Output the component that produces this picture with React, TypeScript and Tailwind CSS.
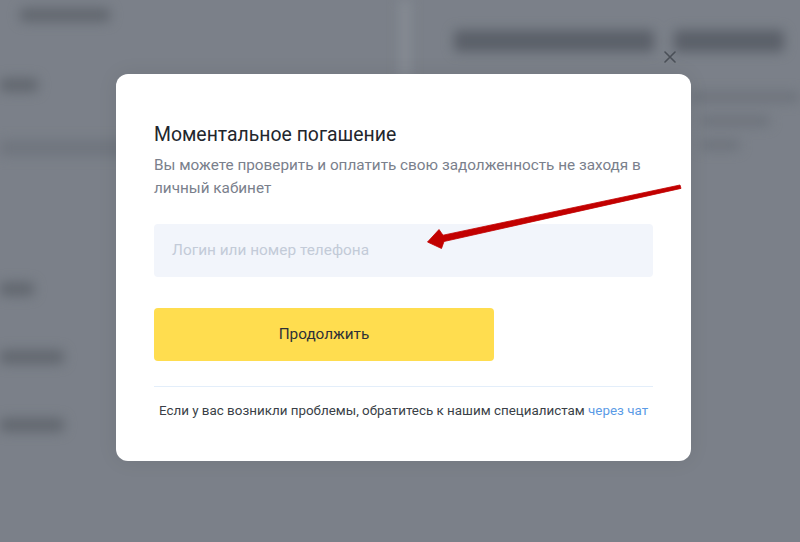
import React from "react";

export default function App() {
  return (
    <div className="relative w-[800px] h-[542px] overflow-hidden bg-[#7b8089]" style={{ fontFamily: "Roboto, 'Noto Sans', sans-serif" }}>
      {/* blurred background page */}
      <div className="flex h-full blur-[6px]">
        <div className="w-[400px] flex flex-col pt-[8px]">
          <div className="ml-[20px] h-[14px] w-[90px] rounded bg-[#62676f]" />
          <div className="mt-[56px] h-[14px] w-[38px] rounded bg-[#62676f]" />
          <div className="mt-[48px] h-[16px] w-[400px] bg-[#70757e]" />
          <div className="mt-[126px] h-[14px] w-[34px] rounded bg-[#62676f]" />
          <div className="mt-[54px] h-[14px] w-[64px] rounded bg-[#62676f]" />
          <div className="mt-[54px] h-[14px] w-[64px] rounded bg-[#62676f]" />
        </div>
        <div className="w-[16px] bg-[#878c95] h-[80px]" />
        <div className="flex-1 flex flex-col pt-[30px] pl-[44px]">
          <div className="flex gap-[20px]">
            <div className="h-[22px] w-[200px] rounded bg-[#5b6069]" />
            <div className="h-[22px] w-[110px] rounded bg-[#5b6069]" />
          </div>
          <div className="ml-[236px] mt-[40px] h-[10px] w-[110px] rounded bg-[#6d727b]" />
          <div className="ml-[246px] mt-[14px] h-[10px] w-[70px] rounded bg-[#6d727b]" />
          <div className="ml-[246px] mt-[14px] h-[10px] w-[40px] rounded bg-[#6d727b]" />
        </div>
      </div>

      {/* overlay with modal */}
      <div className="absolute inset-0 pt-[74px] pl-[116px]">
        <div className="relative w-[575px] rounded-[12px] bg-white px-[38px] pt-[48px] pb-[40px] shadow-[0_0_20px_rgba(0,0,0,0.08)]">
          <button className="absolute right-[15px] top-[-23px] w-[12px] h-[12px] flex items-center justify-center">
            <svg width="12" height="12" viewBox="0 0 12 12">
              <path d="M1 1 L11 11 M11 1 L1 11" stroke="#4a4f57" strokeWidth="1.6" strokeLinecap="round" />
            </svg>
          </button>
          <div className="text-[19.4px] leading-[26px] text-[#22262d]">Моментальное погашение</div>
          <div className="mt-[6px] text-[15.3px] leading-[23px] text-[#7a808c]">
            Вы можете проверить и оплатить свою задолженность не заходя в личный кабинет
          </div>
          <div className="mt-[24px] h-[53px] rounded-[4px] bg-[#f2f5fb] flex items-center px-[18px]">
            <span className="text-[15.4px] text-[#c3cbd8]">Логин или номер телефона</span>
          </div>
          <div className="mt-[31px] h-[53px] w-[340px] rounded-[4px] bg-[#ffdd4f] flex items-center justify-center">
            <span className="text-[15.3px] text-[#2e3137]">Продолжить</span>
          </div>
          <div className="mt-[25px] h-px bg-[#e3eefa]" />
          <div className="mt-[14px] text-center text-[13.4px] leading-[20px] text-[#3a3f47] whitespace-nowrap">
            Если у вас возникли проблемы, обратитесь к нашим специалистам <span className="text-[#5b9be6]">через чат</span>
          </div>
        </div>
      </div>

      {/* red annotation arrow */}
      <svg className="absolute left-0 top-0 pointer-events-none" width="800" height="542" viewBox="0 0 800 542">
        <polygon
          points="680,185 443,235.2 439,229.5 427.5,242 441.5,248.5 444,241.5 681,188.4"
          fill="#c20000"
          stroke="#c20000"
          strokeWidth="0.8"
          strokeLinejoin="round"
        />
      </svg>
    </div>
  );
}
